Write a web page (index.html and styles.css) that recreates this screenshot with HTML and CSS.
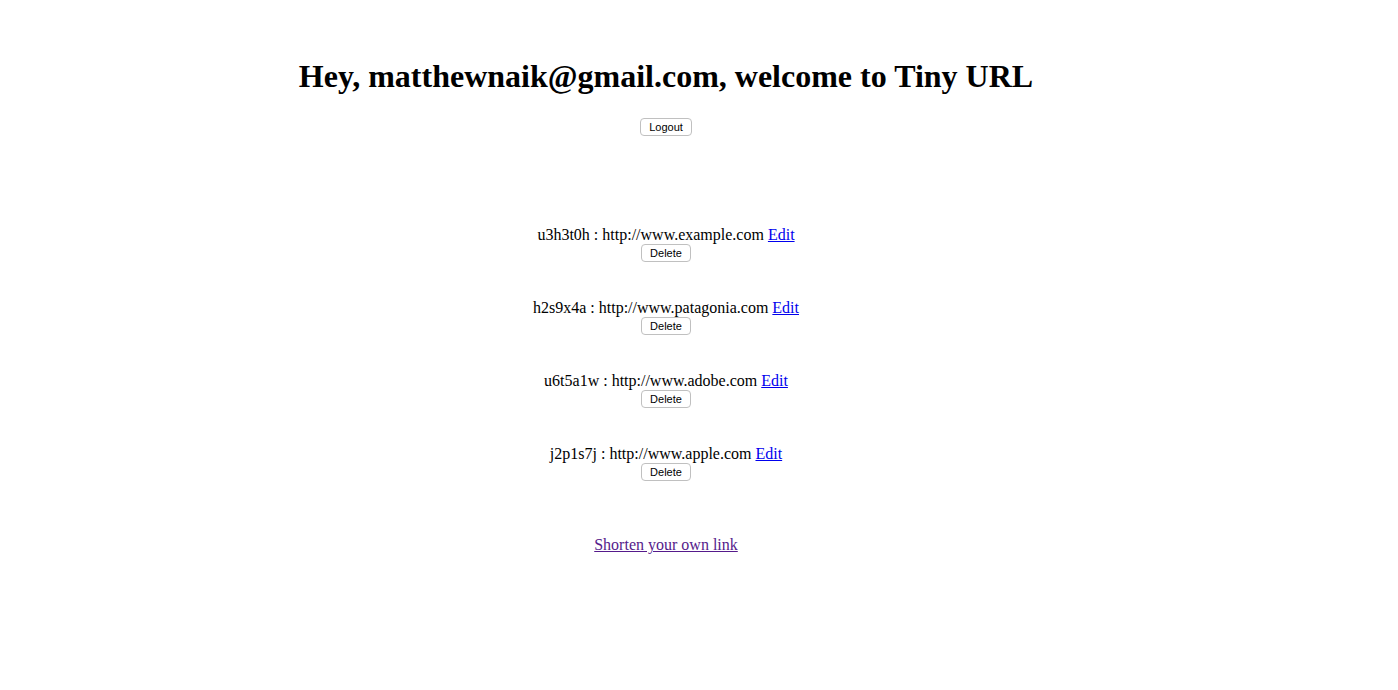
FILE: index.html
```html
<!DOCTYPE html>
<html>
<head>
<meta charset="utf-8">
<title>Tiny URL</title>
<link rel="stylesheet" href="styles.css">
</head>
<body>
<div class="page">
  <header class="top">
    <h1 class="title">Hey, matthewnaik@gmail.com, welcome to Tiny URL</h1>
    <form class="logout-form"><button type="button" class="btn">Logout</button></form>
  </header>
  <main class="urls">
    <div class="url-row">
      <div class="url-line">u3h3t0h : http://www.example.com <a href="#" class="edit">Edit</a></div>
      <button type="button" class="btn">Delete</button>
    </div>
    <div class="url-row">
      <div class="url-line">h2s9x4a : http://www.patagonia.com <a href="#" class="edit">Edit</a></div>
      <button type="button" class="btn">Delete</button>
    </div>
    <div class="url-row">
      <div class="url-line">u6t5a1w : http://www.adobe.com <a href="#" class="edit">Edit</a></div>
      <button type="button" class="btn">Delete</button>
    </div>
    <div class="url-row">
      <div class="url-line">j2p1s7j : http://www.apple.com <a href="#" class="edit">Edit</a></div>
      <button type="button" class="btn">Delete</button>
    </div>
  </main>
  <footer class="bottom">
    <a href="#" class="shorten">Shorten your own link</a>
  </footer>
</div>
</body>
</html>
```

FILE: styles.css
```css
html, body {
  margin: 0;
  padding: 0;
  background: #fff;
}
body {
  font-family: "Liberation Serif", "Times New Roman", serif;
  font-size: 16px;
  color: #000;
}
.page {
  width: 1316px;
  margin-left: 8px;
  text-align: center;
  padding-top: 58px;
}
.title {
  font-size: 32px;
  font-weight: bold;
  margin: 0;
  line-height: 37px;
}
.logout-form {
  margin: 22px 0 0 0;
}
.btn {
  font-family: "Liberation Sans", Arial, sans-serif;
  font-size: 11px;
  line-height: 12px;
  padding: 1px 8px;
  background: #fff;
  color: #000;
  border: 1px solid #c0c0c0;
  border-radius: 4px;
  height: 18px;
}
.urls {
  margin-top: 89px;
  display: flex;
  flex-direction: column;
  align-items: center;
  gap: 36px;
}
.url-row {
  display: flex;
  flex-direction: column;
  align-items: center;
}
.url-line {
  line-height: 19px;
}
.edit {
  color: #0000ee;
}
.bottom {
  margin-top: 55px;
}
.shorten {
  color: #551a8b;
}
```
